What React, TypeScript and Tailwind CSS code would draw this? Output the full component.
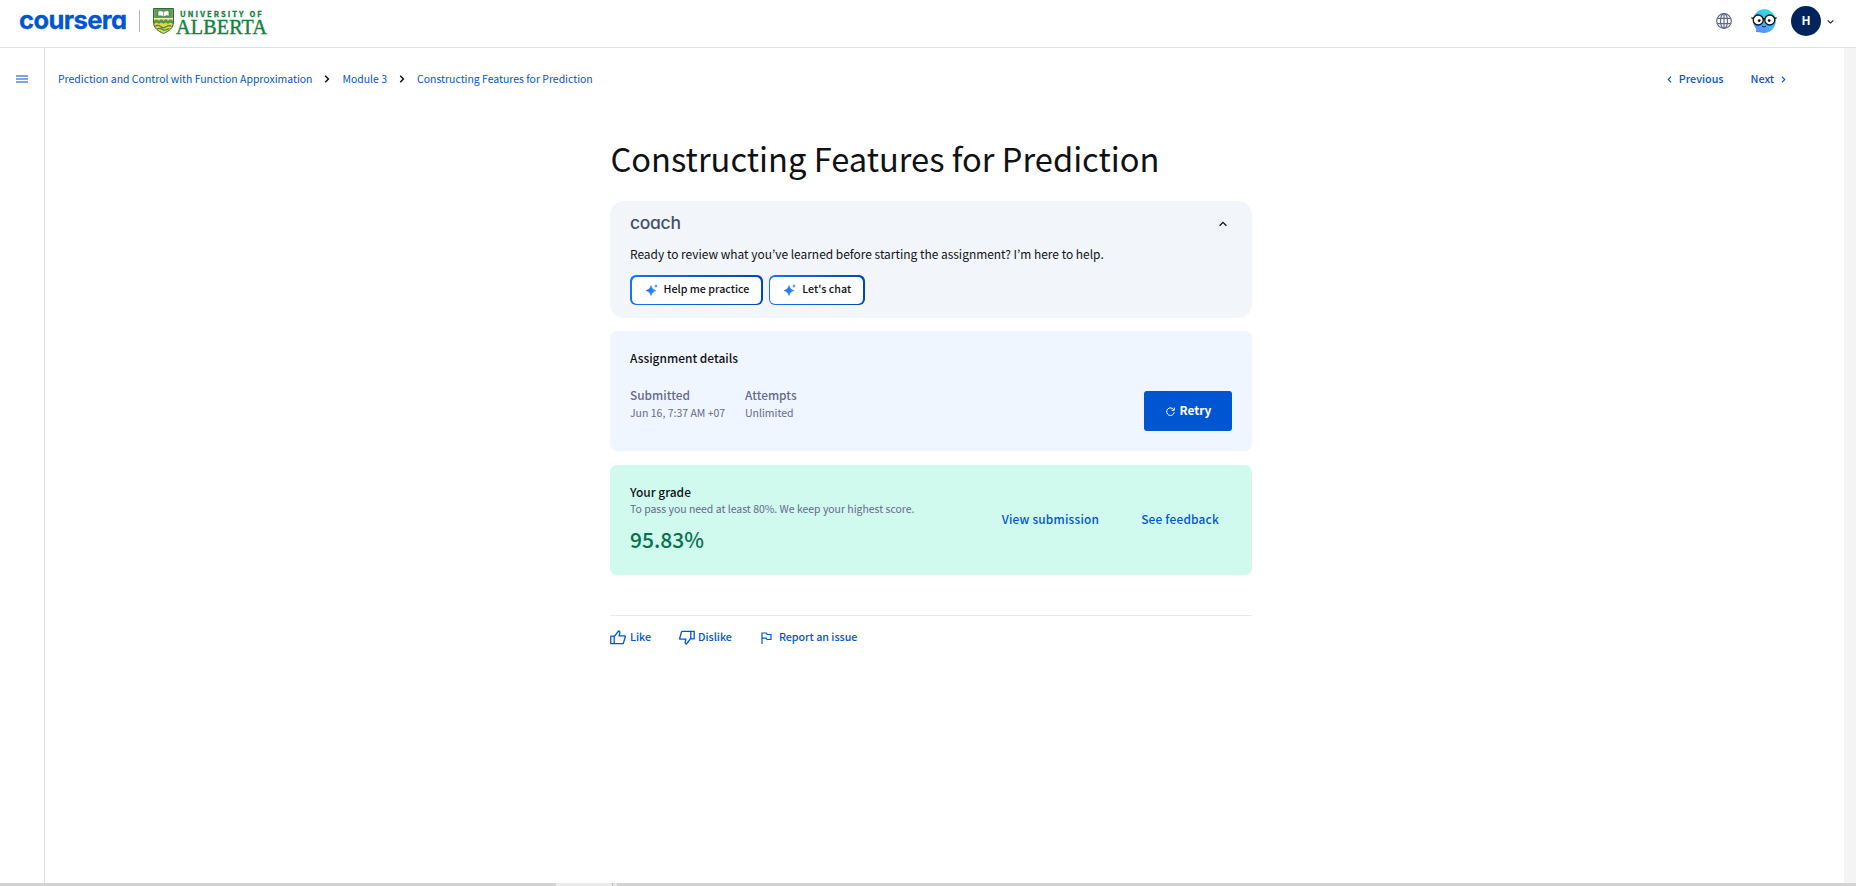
import React from "react";

const Chevron = ({ d, className }: { d: string; className: string }) => (
  <svg viewBox="0 0 8 8" fill="none" stroke="currentColor" className={className}>
    <path d={d} />
  </svg>
);
const RIGHT = "M2.2 0.8 5.4 4 2.2 7.2";
const LEFT = "M5.8 0.8 2.6 4 5.8 7.2";
const UP = "M0.6 5.8 4 2.4 7.4 5.8";
const DOWN = "M0.8 2.6 4 5.8 7.2 2.6";

function Shield() {
  return (
    <svg viewBox="0 0 21 26" className="h-[26px] w-[21px]">
      <path d="M.5.5h20v13.500c0 6-4.500 9-10 11.500C5 23 .5 20 .5 14z" fill="#e3d44a" stroke="#2c6b35" />
      <path d="M1.200 1h18.600v9.500H1.200z" fill="#5f9a58" />
      <path d="M5 3.200c2-.8 4-.6 5.500.4 1.500-1 3.500-1.200 5.500-.4v5c-2-.6-4-.4-5.500.5-1.500-.9-3.500-1.100-5.500-.5z" fill="#fff" stroke="#2c6b35" strokeWidth=".6" />
      <path d="M10.500 3.500v5" stroke="#2c6b35" strokeWidth=".5" />
      <path d="M1 10.500h19" stroke="#f4f1c0" strokeWidth="1" />
      <path d="M1 13c2-2 3.500-2 5 0 1.500-2.200 3-2.200 4.500 0 1.500-2.200 3-2.200 4.500 0 1.500-2 3-2 5 0v3c-2-1.600-3.500-1.600-5 0-1.500-1.600-3-1.600-4.500 0-1.500-1.600-3-1.600-4.500 0-1.500-1.600-3-1.600-5 0z" fill="#5a9640" />
      <path d="M2 18.500c2-1.500 4-1.500 5.500 0s4 1.500 6 0 3.500-1 5 0M4 21.300c2-1.500 3.500-1 5 0s4 1 7-.8" stroke="#4c8b3e" strokeWidth="1.300" fill="none" />
    </svg>
  );
}

function Globe() {
  return (
    <svg viewBox="0 0 16 16" fill="none" stroke="#636b88" strokeWidth="1.200" className="size-4">
      <circle cx="8" cy="8" r="7.300" />
      <ellipse cx="8" cy="8" rx="3.500" ry="7.300" />
      <path d="M8 .7v14.600M1.300 5.300h13.400M1.300 10.700h13.400" />
    </svg>
  );
}

function CoachFace() {
  return (
    <svg viewBox="0 0 26 26" className="size-[26px]">
      <defs>
        <linearGradient id="face" x1="1" y1="0" x2="0.300" y2="1">
          <stop offset="0" stopColor="#2ff0c8" />
          <stop offset=".45" stopColor="#3cc4ee" />
          <stop offset="1" stopColor="#5b8dff" />
        </linearGradient>
      </defs>
      <path d="M13 1a12 12 0 1 1-4.500 23.200L5 24l.2-3A12 12 0 0 1 13 1z" fill="url(#face)" />
      <circle cx="7.200" cy="12" r="5" fill="#fff" stroke="#111" strokeWidth="1.300" />
      <circle cx="18.800" cy="12" r="5" fill="#fff" stroke="#111" strokeWidth="1.300" />
      <path d="M.3 9.800 2.600 10.300M25.700 9.800l-2.300.5M12 11.200c.7-.6 1.300-.6 2 0" stroke="#111" strokeWidth="1.300" fill="none" />
      <circle cx="8.200" cy="12.600" r="1.400" fill="#111" />
      <circle cx="18.200" cy="12.600" r="1.400" fill="#111" />
      <path d="M11 18c1.200 1.200 3 1.200 4.200 0" stroke="#123" fill="none" />
    </svg>
  );
}

function Sparkle() {
  return (
    <svg viewBox="0 0 12 12" className="size-3">
      <defs>
        <linearGradient id="spark" x1="0" y1="0" x2="1" y2="0">
          <stop offset="0" stopColor="#0f6bf0" />
          <stop offset="1" stopColor="#3a92f5" />
        </linearGradient>
      </defs>
      <path d="M5 1.500C5.900 4.400 7 5.500 10.200 6.600 7 7.700 5.900 8.800 5 11.700 4.100 8.800 3.200 7.700 0 6.600 3.200 5.500 4.100 4.400 5 1.500z" fill="url(#spark)" stroke="url(#spark)" strokeWidth=".5" />
      <path d="M10 0c.4 1.200.8 1.600 2 2-1.200.4-1.600.8-2 2-.4-1.200-.8-1.600-2-2 1.200-.4 1.600-.8 2-2z" fill="#3a92f5" />
    </svg>
  );
}

function Thumb({ className }: { className: string }) {
  return (
    <svg viewBox="0 0 16 15" fill="none" stroke="currentColor" strokeWidth="1.300" strokeLinejoin="round" className={className}>
      <path d="M.8 6.200h3.400v7.500H.8zM4.200 6.700 8.600 1c1 .2 1.500 1 1.200 2.200l-.7 2.600h5.600c.5 0 .7.5.6 1l-1.800 6.200c-.1.500-.5.700-1 .7H4.200z" />
    </svg>
  );
}

function ActionButton({ label }: { label: string }) {
  return (
    <button className="flex h-[30px] rounded-[6px] bg-linear-to-r from-[#1a73f0] to-[#0048b0] p-[1.500px]">
      <span className="flex h-full items-center gap-[6px] rounded-[5px] bg-white pr-[12px] pl-[14px] text-[10.700px] font-medium">
        <Sparkle />
        <span className="relative -top-px">{label}</span>
      </span>
    </button>
  );
}

export default function App() {
  return (
    <div className="flex h-[886px] w-full flex-col overflow-hidden bg-white font-['Noto_Sans_CJK_JP',sans-serif] leading-none whitespace-nowrap text-[#0f1114]">
      <header className="flex h-12 shrink-0 items-start border-b border-[#dae1ed] pl-5">
        <div className="mt-[5px] -ml-px w-[109px] font-[Inter,sans-serif] text-[25.500px] leading-[30px] font-bold tracking-[-0.600px] text-[#0056d2] [-webkit-text-stroke:0.300px_#0056d2] [font-feature-settings:'cv11']">
          coursera
        </div>
        <div className="mt-[10px] ml-[11px] h-[22px] w-px bg-[#aeb8c9]" />
        <div className="mt-2 ml-[13px] flex">
          <Shield />
          <div className="ml-[2px] flex flex-col font-['Liberation_Serif',serif] text-[#16803f]">
            <span className="ml-[4px] pt-px font-['Noto_Sans_CJK_JP',sans-serif] text-[7.600px] leading-[9px] font-bold tracking-[2.100px] [-webkit-text-stroke:0.300px_#16803f]">UNIVERSITY OF</span>
            <span className="text-[20px] leading-[18px] tracking-[0.250px] [-webkit-text-stroke:0.400px_#16803f]">ALBERTA</span>
          </div>
        </div>
        <div className="ml-auto flex h-[42px] items-center pr-[22px]">
          <Globe />
          <div className="ml-[19px]">
            <CoachFace />
          </div>
          <div className="ml-[14px] flex size-[30px] items-center justify-center rounded-full bg-[#00255d] text-[12px] font-bold text-white">
            <span className="relative -top-px">H</span>
          </div>
          <Chevron d={DOWN} className="ml-[6px] size-[7px] stroke-[1.200]" />
        </div>
      </header>

      <div className="flex min-h-0 flex-1">
        <aside className="flex w-[45px] shrink-0 justify-center border-r border-[#dae1ed] pt-[27px]">
          <div className="flex h-[8px] w-[12px] flex-col justify-between">
            <i className="h-[2px] bg-[#7ba7e8]" />
            <i className="h-[2px] bg-[#7ba7e8]" />
            <i className="h-[2px] bg-[#7ba7e8]" />
          </div>
        </aside>

        <div className="flex flex-1 flex-col">
          <nav className="flex h-[62px] items-center pr-[57px] pl-[13px] text-[10.460px] text-[#0056d2]">
            <a>Prediction and Control with Function Approximation</a>
            <Chevron d={RIGHT} className="mx-[11px] size-[8px] stroke-[1.500] text-[#0f1114]" />
            <a>Module 3</a>
            <Chevron d={RIGHT} className="mx-[11px] size-[8px] stroke-[1.500] text-[#0f1114]" />
            <a>Constructing Features for Prediction</a>
            <div className="ml-auto flex items-center text-[10.750px] font-medium">
              <Chevron d={LEFT} className="mr-[6px] size-[7px] stroke-[1.300]" />
              Previous
              <span className="ml-[27px]">Next</span>
              <Chevron d={RIGHT} className="ml-[6px] size-[7px] stroke-[1.300]" />
            </div>
          </nav>

          <main className="ml-[565px] w-[642px]">
            <h1 className="mt-[28px] pl-[0.500px] text-[32.660px] leading-[40px]">Constructing Features for Prediction</h1>

            <section className="mt-[23px] h-[117px] rounded-[14px] bg-[#f2f5fa] px-5 pt-3">
              <div className="flex h-5 items-center justify-between">
                <span className="font-[Inter,sans-serif] text-[17.500px] font-medium tracking-[-0.300px] text-[#44506a] [font-feature-settings:'cv11']">coach</span>
                <Chevron d={UP} className="mt-px mr-[5px] size-[8px] stroke-[1.300]" />
              </div>
              <p className="mt-[11px] text-[11.950px] leading-[20px]">
                Ready to review what you’ve learned before starting the assignment? I’m here to help.
              </p>
              <div className="mt-[11px] flex gap-[6px]">
                <ActionButton label="Help me practice" />
                <ActionButton label="Let's chat" />
              </div>
            </section>

            <section className="mt-[13px] h-[120px] rounded-[7px] bg-[#f0f6ff] px-5 pt-[17px]">
              <h2 className="text-[11.950px] leading-[20px] font-medium">Assignment details</h2>
              <div className="mt-[18px] flex text-[#636b88]">
                <dl className="w-[115px]">
                  <dt className="text-[11.900px] leading-[18px] font-medium">Submitted</dt>
                  <dd className="text-[10.500px] leading-[18px]">Jun 16, 7:37 AM +07</dd>
                </dl>
                <dl>
                  <dt className="text-[11.900px] leading-[18px] font-medium">Attempts</dt>
                  <dd className="text-[10.500px] leading-[18px]">Unlimited</dd>
                </dl>
                <button className="mt-[5px] ml-auto flex h-10 w-[88px] items-center justify-center gap-[5px] rounded-[3px] bg-[#0056d2] pl-px text-[11.900px] font-bold text-white">
                  <svg viewBox="0 0 9 9" fill="none" stroke="currentColor" strokeWidth="1" className="size-[9px]">
                    <path d="M7.700 2.700A3.800 3.800 0 1 0 8.200 5.300M8.300.6v2.700H5.500" />
                  </svg>
                  <span className="relative -top-px">Retry</span>
                </button>
              </div>
            </section>

            <section className="mt-[14px] flex h-[110px] rounded-[7px] bg-[#d0faed] px-5 pt-[17px]">
              <div>
                <h2 className="text-[11.950px] leading-[20px] font-medium">Your grade</h2>
                <p className="text-[10.460px] leading-[14px] text-[#636b88]">To pass you need at least 80%. We keep your highest score.</p>
                <p className="mt-[8px] text-[21px] leading-[30px] font-medium text-[#087051]">95.83%</p>
              </div>
              <div className="mt-[27px] mr-[13px] ml-auto flex gap-[42px] text-[11.900px] leading-[20px] font-medium tracking-[0.200px] text-[#0056d2]">
                <a>View submission</a>
                <a>See feedback</a>
              </div>
            </section>

            <footer className="mt-[40px] flex h-[44px] items-center border-t border-[#e5eaf5] text-[10.700px] font-medium text-[#0056d2]">
              <Thumb className="mr-[4px] h-[15px] w-4" />
              Like
              <Thumb className="mr-[3px] ml-[28px] h-[15px] w-4 rotate-180" />
              Dislike
              <svg viewBox="0 0 11 12" fill="none" stroke="currentColor" strokeWidth="1.200" className="mr-[7px] ml-[29px] h-3 w-[11px]">
                <path d="M1 12V1h4.500l.7 1.500H10v5H6l-.7-1.300H1" />
              </svg>
              Report an issue
            </footer>
          </main>
        </div>
        <div className="w-3 bg-[#f4f4f4]" />
      </div>

      <div className="flex h-[3px] shrink-0 bg-[#d3d3d3]">
        <div className="ml-[556px] w-[56px] bg-[#ebebeb]" />
        <div className="w-px bg-[#b5b5b5]" />
        <div className="w-[4px] bg-[#e6e6e6]" />
      </div>
    </div>
  );
}
